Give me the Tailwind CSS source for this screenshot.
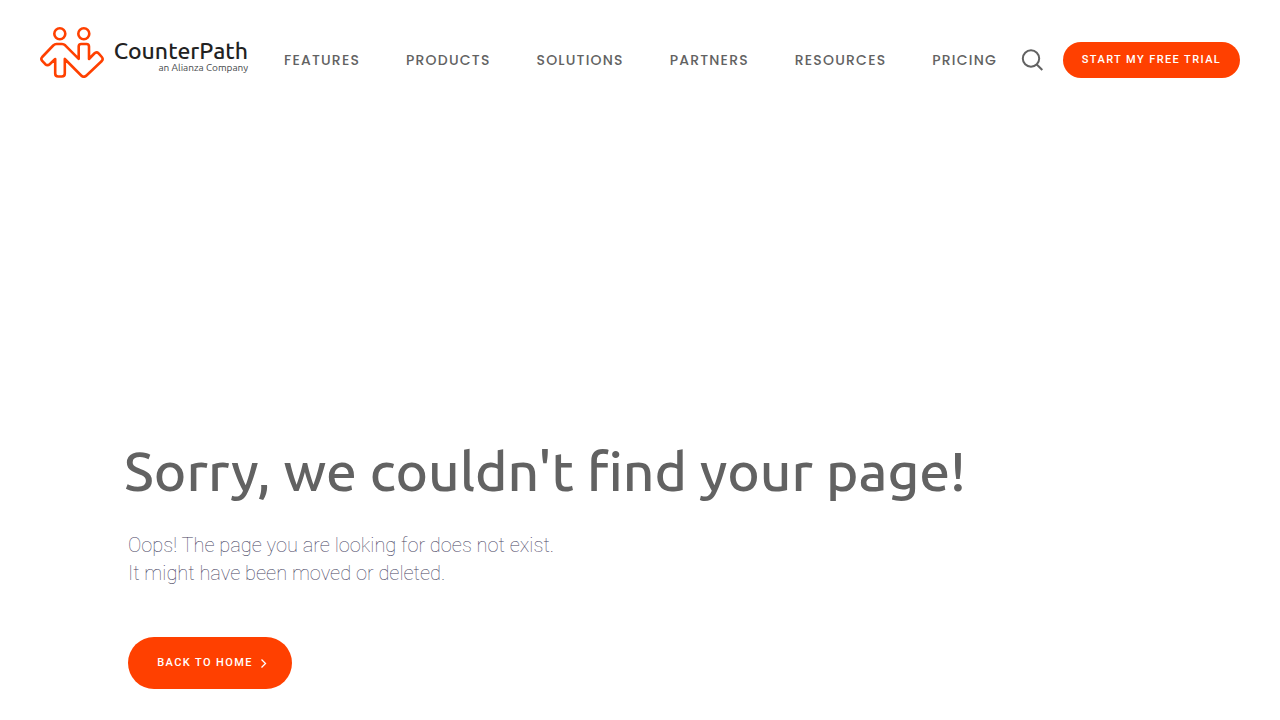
<!DOCTYPE html>
<html lang="en">
<head>
  <meta charset="UTF-8" />
  <meta name="viewport" content="width=device-width, initial-scale=1" />
  <title>Page not found - CounterPath</title>
  <script src="https://cdn.jsdelivr.net/npm/@tailwindcss/browser@4"></script>
</head>
<body class="min-h-screen bg-white font-['Roboto',sans-serif] text-[#626262]">

  <!-- Header -->
  <header class="flex items-center px-10 h-[120px]">
    <a href="#" class="flex shrink-0 w-[208px] mr-9 -mt-4" aria-label="CounterPath home">
      <svg class="w-16 h-[52px] shrink-0" viewBox="0 0 64 52" fill="none" stroke="#ff4000" stroke-width="2.6" stroke-linejoin="round">
        <circle cx="19.8" cy="7.7" r="5.5" />
        <circle cx="43.8" cy="7.7" r="5.5" />
        <path d="M16.5 18H22Q23.8 18 25.2 19.3L38.7 32.8V20.5Q38.7 18 41.2 18H46.5Q49 18 49 20.5V33L54.3 27.5Q56.5 25.3 58.6 27.4L61.8 31Q63.5 33 61.8 35L46.5 49.5Q43.8 52 41.2 49.5L24.8 33V47.5Q24.8 50.5 21.8 50.5H18.2Q15.2 50.5 15.2 47.5V33L9.7 38.2Q7.5 40.2 5.3 38.2L2.2 34.8Q0.5 33 2.2 31L13.2 19.5Q14.8 18 16.5 18Z" />
      </svg>
      <span class="flex-1 flex flex-col items-end pt-[9px] font-['Ubuntu','Noto_Sans',sans-serif]">
        <span class="font-medium text-[23px] leading-8 text-[#222222]">CounterPath</span>
        <span class="text-[10px] leading-3 -mt-[5px] text-[#45484a] whitespace-nowrap">an Alianza Company</span>
      </span>
    </a>
    <nav class="flex-1">
      <ul class="flex justify-between font-['Poppins','Lato',sans-serif] font-medium text-sm tracking-[1.2px]">
        <li><a href="#" class="hover:text-[#ff4000]">FEATURES</a></li>
        <li><a href="#" class="hover:text-[#ff4000]">PRODUCTS</a></li>
        <li><a href="#" class="hover:text-[#ff4000]">SOLUTIONS</a></li>
        <li><a href="#" class="hover:text-[#ff4000]">PARTNERS</a></li>
        <li><a href="#" class="hover:text-[#ff4000]">RESOURCES</a></li>
        <li><a href="#" class="hover:text-[#ff4000]">PRICING</a></li>
      </ul>
    </nav>
    <button type="button" class="ml-6 mr-5 shrink-0" aria-label="Search">
      <svg class="w-[22px] h-[22px]" viewBox="0 0 22 22" fill="none" stroke="#626262" stroke-width="2">
        <circle cx="10" cy="9.5" r="8.2" />
        <path d="M15.5 15.2L21.3 21" />
      </svg>
    </button>
    <a href="#" class="shrink-0 w-[177px] h-9 flex items-center justify-center rounded-full bg-[#ff4000] text-white text-[11px] font-medium tracking-[1.4px]">START MY FREE TRIAL</a>
  </header>

  <!-- Not found message -->
  <main class="px-32 pt-[315px]">
    <h1 class="-ml-1 font-['Ubuntu','Noto_Sans',sans-serif] font-medium text-[55px] leading-[72px]">Sorry, we couldn't find your page!</h1>
    <p class="mt-6 text-xl leading-7 font-thin text-[#47445f]">
      Oops! The page you are looking for does not exist.<br />
      It might have been moved or deleted.
    </p>
    <a href="#" class="mt-[50px] w-[164px] h-[52px] pl-1 flex items-center justify-center gap-2 rounded-full bg-[#ff4000] text-white text-[11px] font-medium tracking-[1.4px]">
      <span>BACK TO HOME</span>
      <svg class="w-1.5 h-2.5" viewBox="0 0 6 10" fill="none" stroke="currentColor" stroke-width="1.3">
        <path d="M0.5 1.5L4.5 5.5L0.5 9.5" />
      </svg>
    </a>
  </main>

</body>
</html>
